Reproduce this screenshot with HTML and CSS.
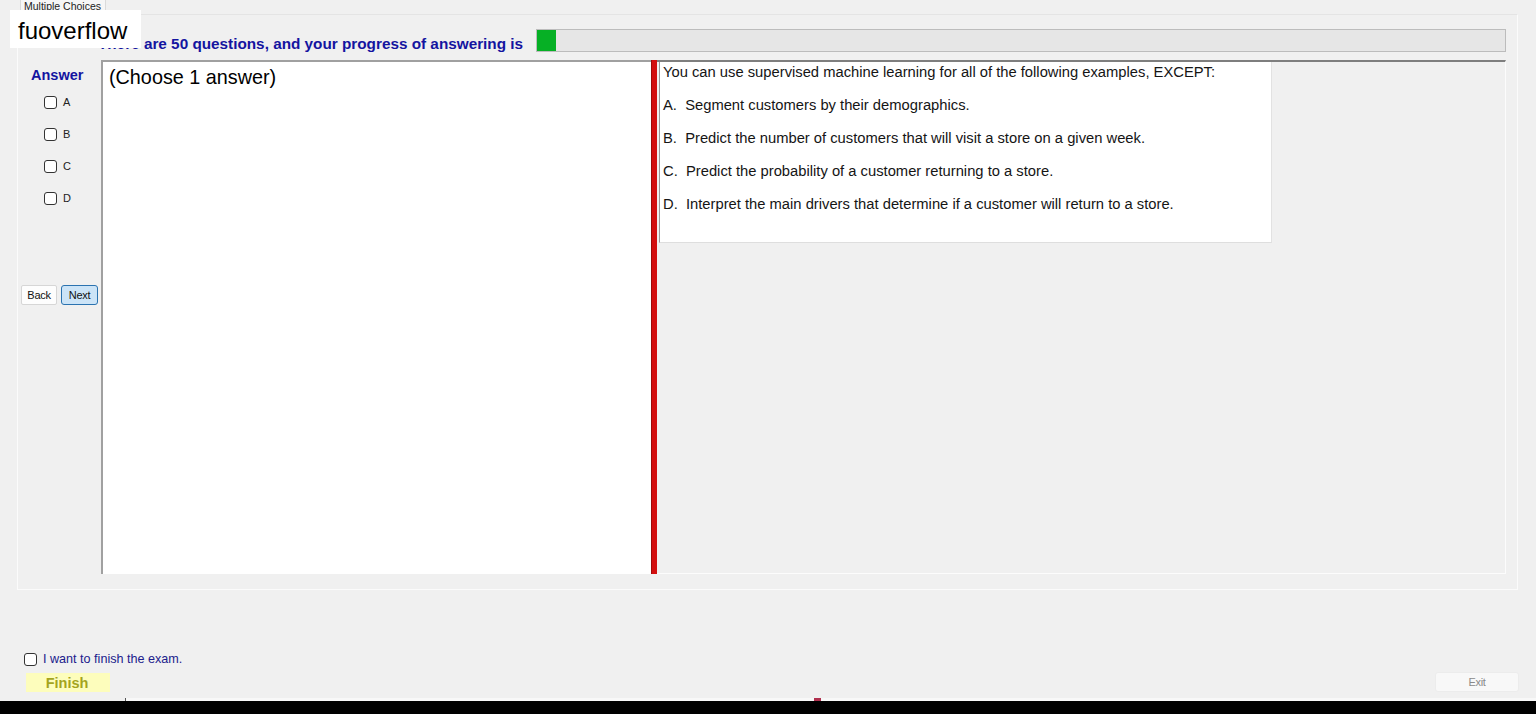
FILE: index.html
```html
<!DOCTYPE html>
<html lang="en">
<head>
<meta charset="utf-8">
<title>Multiple Choices</title>
<link rel="stylesheet" href="styles.css">
</head>
<body>
<div class="app">
  <div class="tabstrip">
    <div class="tab">Multiple Choices</div>
  </div>
  <div class="tabpage">
    <div class="header">
      <div class="header-text">There are 50 questions, and your progress of answering is</div>
      <div class="progress"><div class="progress-fill" style="width:2%"></div></div>
    </div>
    <div class="content">
      <div class="leftcol">
        <div class="answer-title">Answer</div>
        <div class="options">
          <div class="opt"><span class="cb"></span><span class="opt-label">A</span></div>
          <div class="opt"><span class="cb"></span><span class="opt-label">B</span></div>
          <div class="opt"><span class="cb"></span><span class="opt-label">C</span></div>
          <div class="opt"><span class="cb"></span><span class="opt-label">D</span></div>
        </div>
        <div class="navbtns">
          <button class="btn btn-back">Back</button>
          <button class="btn btn-next">Next</button>
        </div>
      </div>
      <div class="mainbox">
        <div class="choose">(Choose 1 answer)</div>
      </div>
      <div class="splitter"></div>
      <div class="rightpanel">
        <div class="question">
          <p class="qline">You can use supervised machine learning for all of the following examples, EXCEPT:</p>
          <p class="qline">A.  Segment customers by their demographics.</p>
          <p class="qline">B.  Predict the number of customers that will visit a store on a given week.</p>
          <p class="qline">C.  Predict the probability of a customer returning to a store.</p>
          <p class="qline">D.  Interpret the main drivers that determine if a customer will return to a store.</p>
        </div>
      </div>
    </div>
  </div>
  <div class="finish-check">
    <span class="cb"></span><span class="finish-label">I want to finish the exam.</span>
  </div>
  <div class="finish-row">
    <button class="btn-finish">Finish</button>
    <button class="btn-exit">Exit</button>
  </div>
  <div class="strip"><span class="tick"></span><span class="redmark"></span></div>
  <div class="taskbar"></div>
  <div class="watermark">fuoverflow</div>
</div>
</body>
</html>
```
FILE: styles.css
```css
html, body {
  margin: 0;
  padding: 0;
}
body {
  background: #f0f0f0;
  font-family: "Liberation Sans", Arial, sans-serif;
  width: 1536px;
  height: 714px;
  overflow: hidden;
}
.app {
  position: relative;
  display: flex;
  flex-direction: column;
  height: 714px;
}
.tabstrip {
  height: 14px;
  padding-left: 20px;
  display: flex;
}
.tab {
  width: 86px;
  height: 14px;
  box-sizing: border-box;
  border-left: 1px solid #dadada;
  border-right: 1px solid #dadada;
  background: #f6f6f6;
  font-size: 10.5px;
  line-height: 12px;
  color: #222;
  padding-left: 3px;
  white-space: nowrap;
  overflow: hidden;
}
.tabpage {
  margin-left: 17px;
  width: 1501px;
  height: 576px;
  box-sizing: border-box;
  border: 1px solid #fbfbfb;
  border-top-color: #e4e4e4;
  padding: 14px 11px 15px 3px;
  display: flex;
  flex-direction: column;
}
.header {
  height: 23px;
  display: flex;
  align-items: flex-end;
}
.header-text {
  margin-left: 77px;
  font-weight: bold;
  font-size: 15.3px;
  line-height: 17px;
  color: #1414a0;
  white-space: nowrap;
}
.progress {
  margin-left: auto;
  width: 970px;
  height: 23px;
  box-sizing: border-box;
  border: 1px solid #bcbcbc;
  background: #e6e6e6;
  display: flex;
}
.progress-fill {
  height: 100%;
  background: #06b025;
}
.content {
  margin-top: 8px;
  height: 514px;
  display: flex;
}
.leftcol {
  width: 80px;
  display: flex;
  flex-direction: column;
}
.answer-title {
  padding-top: 7px;
  padding-left: 10px;
  font-weight: bold;
  font-size: 14.5px;
  line-height: 17px;
  color: #1414a0;
}
.options {
  margin-top: 2px;
  display: flex;
  flex-direction: column;
}
.opt {
  height: 32px;
  display: flex;
  align-items: center;
  padding-left: 23px;
}
.cb {
  width: 13px;
  height: 13px;
  box-sizing: border-box;
  border: 1px solid #333;
  border-radius: 3px;
  background: #fff;
  flex: none;
}
.opt-label {
  margin-left: 6px;
  font-size: 11px;
  color: #222;
}
.navbtns {
  margin-top: 71px;
  display: flex;
  gap: 4px;
}
.btn {
  height: 20px;
  box-sizing: border-box;
  font-family: "Liberation Sans", Arial, sans-serif;
  font-size: 11px;
  padding: 0;
  color: #111;
  letter-spacing: -0.3px;
}
.btn-back {
  width: 36px;
  background: #fdfdfd;
  border: 1px solid #d6d6d6;
  border-radius: 2px;
}
.btn-next {
  width: 37px;
  background: #cce4f7;
  border: 1px solid #2b73b0;
  border-radius: 3px;
}
.mainbox {
  width: 550px;
  box-sizing: border-box;
  background: #fff;
  border-top: 2px solid #a0a0a0;
  border-left: 2px solid #a0a0a0;
  padding: 4px 6px;
}
.choose {
  font-size: 19.8px;
  line-height: 23px;
  color: #000;
}
.splitter {
  width: 6px;
  box-sizing: border-box;
  background: #d30f0f;
  border-left: 1px solid #9e0a0a;
}
.rightpanel {
  flex: 1;
  box-sizing: border-box;
  border-top: 2px solid #7e7e7e;
  border-right: 1px solid #fcfcfc;
  border-bottom: 1px solid #fcfcfc;
  padding-left: 2px;
  background: #f0f0f0;
}
.question {
  width: 613px;
  height: 181px;
  box-sizing: border-box;
  background: #fff;
  border-left: 1px solid #9a9a9a;
  border-right: 1px solid #e2e2e2;
  border-bottom: 1px solid #dedede;
  padding: 2px 0 0 3px;
}
.qline {
  margin: 0 0 17px 0;
  font-size: 14.75px;
  line-height: 16px;
  color: #151515;
  white-space: pre;
}
.finish-check {
  margin-top: 61px;
  height: 16px;
  padding-left: 24px;
  display: flex;
  align-items: center;
}
.finish-label {
  margin-left: 6px;
  font-size: 12.6px;
  color: #20208c;
}
.finish-row {
  margin-top: 5px;
  height: 20px;
  padding: 0 17px 0 26px;
  display: flex;
  justify-content: space-between;
  align-items: flex-end;
}
.btn-finish {
  width: 84px;
  height: 19px;
  padding: 0 2px 0 0;
  border: none;
  background: #fdfdbc;
  font-family: "Liberation Sans", Arial, sans-serif;
  font-weight: bold;
  font-size: 14.5px;
  color: #a4a41e;
}
.btn-exit {
  width: 84px;
  height: 20px;
  padding: 0;
  box-sizing: border-box;
  border: 1px solid #ececec;
  border-radius: 3px;
  background: #f8f8f8;
  font-family: "Liberation Sans", Arial, sans-serif;
  font-size: 11px;
  color: #8a8a8a;
  letter-spacing: -0.3px;
}
.strip {
  margin-top: 6px;
  height: 3px;
  position: relative;
  margin-left: 126px;
  background: #f8f8f8;
}
.tick {
  position: absolute;
  left: -1px;
  top: 0;
  width: 1px;
  height: 3px;
  background: #555;
}
.redmark {
  position: absolute;
  left: 688px;
  top: 0;
  width: 7px;
  height: 3px;
  background: #b0304e;
}
.taskbar {
  height: 13px;
  background: #000;
}
.watermark {
  position: absolute;
  left: 10px;
  top: 10px;
  width: 131px;
  height: 38px;
  box-sizing: border-box;
  background: #fff;
  padding-left: 8px;
  font-size: 24px;
  line-height: 42px;
  color: #000;
}
```
